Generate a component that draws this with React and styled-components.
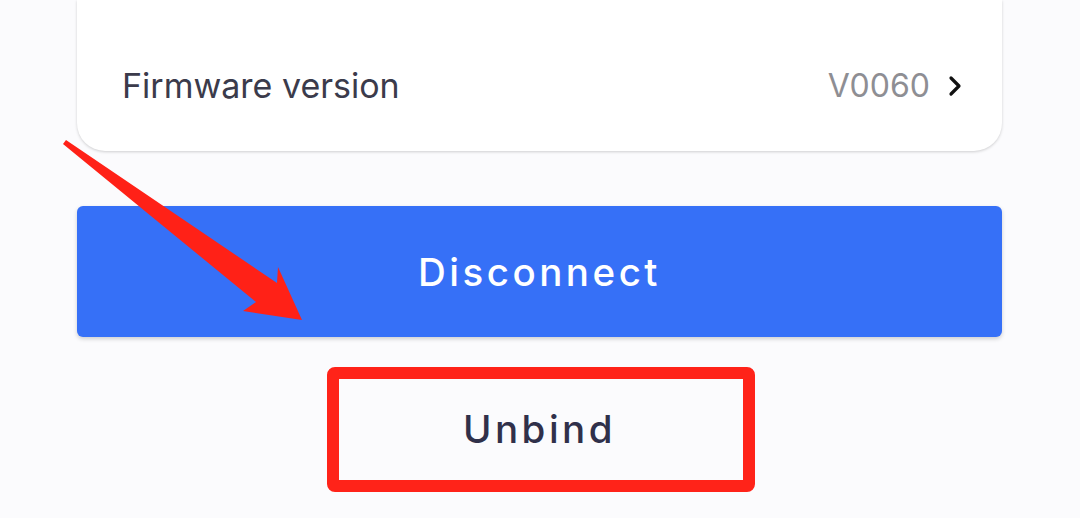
import React from 'react';
import styled, { createGlobalStyle } from 'styled-components';

const GlobalStyle = createGlobalStyle`
  html, body {
    margin: 0;
    padding: 0;
    background: #fbfbfd;
    font-family: Inter, "Noto Sans", sans-serif;
  }
`;

const Page = styled.div`
  position: relative;
  width: 1080px;
  height: 518px;
  overflow: hidden;
  box-sizing: border-box;
  padding: 0 78px 0 77px;
  display: flex;
  flex-direction: column;
`;

const Card = styled.div`
  height: 151px;
  box-sizing: border-box;
  background: #ffffff;
  border-radius: 0 0 28px 28px;
  box-shadow: 0 1px 3px rgba(0, 0, 0, 0.18);
  padding: 20px 40px 0 45px;
  display: flex;
  align-items: center;
  justify-content: space-between;
`;

const Label = styled.span`
  font-size: 34px;
  color: #3b3b4b;
`;

const Value = styled.span`
  display: flex;
  align-items: center;
  gap: 18px;
  font-size: 32px;
  color: #8e8e93;
`;

const Button = styled.div`
  height: ${({ $primary }) => ($primary ? '131px' : '126px')};
  margin-top: ${({ $primary }) => ($primary ? '55px' : '29px')};
  border-radius: 6px;
  background: ${({ $primary }) => ($primary ? '#3670f7' : 'transparent')};
  box-shadow: ${({ $primary }) => ($primary ? '0 2px 4px rgba(0,0,0,0.18)' : 'none')};
  color: ${({ $primary }) => ($primary ? '#ffffff' : '#30304a')};
  display: flex;
  align-items: center;
  justify-content: center;
  font-size: 38.5px;
  font-weight: 500;
  letter-spacing: 3.5px;
`;

const Highlight = styled.div`
  position: absolute;
  left: 327px;
  top: 367px;
  width: 428px;
  height: 125px;
  box-sizing: border-box;
  border: 12px solid #ff2319;
  border-radius: 8px;
  pointer-events: none;
`;

const Arrow = styled.svg`
  position: absolute;
  left: 0;
  top: 0;
  pointer-events: none;
`;

const Chevron = () => (
  <svg width="14" height="22" viewBox="0 0 14 22">
    <path d="M3 3 L11 11 L3 19" fill="none" stroke="#111" strokeWidth="3.2" strokeLinecap="round" strokeLinejoin="round" />
  </svg>
);

export default function App() {
  return (
    <>
      <GlobalStyle />
      <Page>
        <Card>
          <Label>Firmware version</Label>
          <Value>
            V0060
            <Chevron />
          </Value>
        </Card>
        <Button $primary>Disconnect</Button>
        <Button>Unbind</Button>
        <Arrow width="1080" height="518" viewBox="0 0 1080 518">
          <polygon points="63,144 66,140 277,283 278,267 302,320 243,311 256,302" fill="#ff2117" />
        </Arrow>
        <Highlight />
      </Page>
    </>
  );
}
